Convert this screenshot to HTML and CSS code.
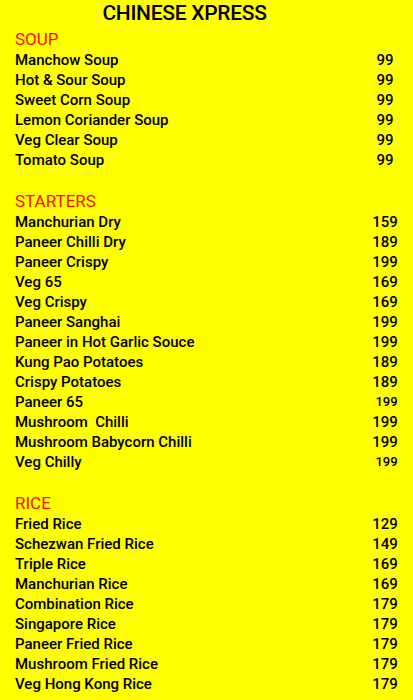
FILE: index.html
```html
<!DOCTYPE html>
<html lang="en">
<head>
    <meta charset="UTF-8">
    <meta name="viewport" content="width=device-width, initial-scale=1.0">
    <title>Chinese Xpress Menu</title>
    <link rel="stylesheet" href="styles.css">
</head>
<body>
    <h1 class="title">CHINESE XPRESS</h1>

    <!-- Soup -->
    <section class="menu-section">
        <h2 class="section-title">SOUP</h2>
        <div class="item"><span>Manchow Soup</span><span class="price">99</span></div>
        <div class="item"><span>Hot &amp; Sour Soup</span><span class="price">99</span></div>
        <div class="item"><span>Sweet Corn Soup</span><span class="price">99</span></div>
        <div class="item"><span>Lemon Coriander Soup</span><span class="price">99</span></div>
        <div class="item"><span>Veg Clear Soup</span><span class="price">99</span></div>
        <div class="item"><span>Tomato Soup</span><span class="price">99</span></div>
    </section>

    <!-- Starters -->
    <section class="menu-section">
        <h2 class="section-title">STARTERS</h2>
        <div class="item"><span>Manchurian Dry</span><span class="price">159</span></div>
        <div class="item"><span>Paneer Chilli Dry</span><span class="price">189</span></div>
        <div class="item"><span>Paneer Crispy</span><span class="price">199</span></div>
        <div class="item"><span>Veg 65</span><span class="price">169</span></div>
        <div class="item"><span>Veg Crispy</span><span class="price">169</span></div>
        <div class="item"><span>Paneer Sanghai</span><span class="price">199</span></div>
        <div class="item"><span>Paneer in Hot Garlic Souce</span><span class="price">199</span></div>
        <div class="item"><span>Kung Pao Potatoes</span><span class="price">189</span></div>
        <div class="item"><span>Crispy Potatoes</span><span class="price">189</span></div>
        <div class="item"><span>Paneer 65</span><span class="price small">199</span></div>
        <div class="item"><span>Mushroom&nbsp; Chilli</span><span class="price">199</span></div>
        <div class="item"><span>Mushroom Babycorn Chilli</span><span class="price">199</span></div>
        <div class="item"><span>Veg Chilly</span><span class="price small">199</span></div>
    </section>

    <!-- Rice -->
    <section class="menu-section">
        <h2 class="section-title">RICE</h2>
        <div class="item"><span>Fried Rice</span><span class="price">129</span></div>
        <div class="item"><span>Schezwan Fried Rice</span><span class="price">149</span></div>
        <div class="item"><span>Triple Rice</span><span class="price">169</span></div>
        <div class="item"><span>Manchurian Rice</span><span class="price">169</span></div>
        <div class="item"><span>Combination Rice</span><span class="price">179</span></div>
        <div class="item"><span>Singapore Rice</span><span class="price">179</span></div>
        <div class="item"><span>Paneer Fried Rice</span><span class="price">179</span></div>
        <div class="item"><span>Mushroom Fried Rice</span><span class="price">179</span></div>
        <div class="item"><span>Veg Hong Kong Rice</span><span class="price">179</span></div>
    </section>
</body>
</html>
```

FILE: styles.css
```css
/* General Styles */
* {
    margin: 0;
    padding: 0;
    box-sizing: border-box;
}

body {
    font-family: Roboto, "Liberation Sans", sans-serif;
    background-color: #ffff00;
    color: #000;
    padding: 0 3px 0 15px;
}

/* Title */
.title {
    font-size: 21px;
    font-weight: 500;
    line-height: 26px;
    letter-spacing: -0.3px;
    text-align: center;
    margin-right: 56px;
    margin-bottom: 3px;
}

/* Sections */
.menu-section {
    margin-bottom: 21px;
}

.section-title {
    color: #f81006;
    font-size: 17px;
    font-weight: 400;
    line-height: 21px;
}

/* Menu rows */
.item {
    display: grid;
    grid-template-columns: 1fr 50px;
    font-size: 15px;
    font-weight: 500;
    line-height: 20px;
}

.price {
    text-align: center;
}

.price.small {
    font-size: 13px;
    padding-left: 3px;
}
```
